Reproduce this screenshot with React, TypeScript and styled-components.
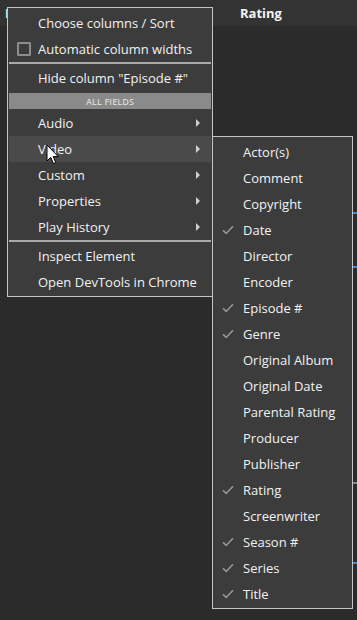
import React from "react";
import styled, { createGlobalStyle } from "styled-components";

const GlobalStyle = createGlobalStyle`
  html, body {
    margin: 0;
    padding: 0;
    background: #2b2b2b;
  }
  body {
    font-family: "Open Sans", "Noto Sans", sans-serif;
    font-size: 13px;
    color: #f2f2f2;
  }
`;

const Page = styled.div`
  position: relative;
  width: 357px;
  height: 620px;
  overflow: hidden;
  background: #2b2b2b;
`;

const HeaderBar = styled.div`
  height: 26px;
  background: #333333;
  display: flex;
  align-items: center;
  padding-left: 5px;
`;

const HeaderCell = styled.div<{ $width: number }>`
  width: ${(p) => p.$width}px;
  font-weight: 700;
  font-size: 13px;
  color: #f4f4f4;
`;

const ScrollMarks = styled.div`
  position: absolute;
  right: 0;
  top: 0;
  width: 5px;
  height: 100%;
`;

const Mark = styled.div<{ $top: number; $color: string }>`
  position: absolute;
  left: 0;
  top: ${(p) => p.$top}px;
  width: 5px;
  height: 2px;
  background: ${(p) => p.$color};
`;

const Menu = styled.div<{ $left: number; $top: number; $width: number }>`
  position: absolute;
  left: ${(p) => p.$left}px;
  top: ${(p) => p.$top}px;
  width: ${(p) => p.$width}px;
  box-sizing: border-box;
  background: #3c3c3c;
  border: 1px solid #c4c4c4;
  padding: 2px 1px 1px;
  display: flex;
  flex-direction: column;
`;

const Item = styled.div<{ $active?: boolean }>`
  height: 26px;
  display: flex;
  align-items: center;
  padding-left: 29px;
  padding-right: 10px;
  background: ${(p) => (p.$active ? "#4a4a4a" : "transparent")};
  white-space: nowrap;
  position: relative;
`;

const Label = styled.span`
  flex: 1;
  color: #f2f2f2;
`;

const Lead = styled.span`
  position: absolute;
  left: 8px;
  top: 0;
  height: 26px;
  display: flex;
  align-items: center;
`;

const CheckBox = styled.span`
  width: 10px;
  height: 10px;
  border: 2px solid #8c8c8c;
  border-radius: 1px;
`;

const Arrow = styled.span`
  width: 0;
  height: 0;
  border-top: 4px solid transparent;
  border-bottom: 4px solid transparent;
  border-left: 4px solid #cfcfcf;
  margin-right: 1px;
`;

const Separator = styled.div`
  height: 2px;
  margin: 0 0 1px;
  background: #a9a9a9;
`;

const SectionHead = styled.div`
  height: 16px;
  margin: 2px 0 1px;
  background: #8a8a8a;
  color: #d8d8d8;
  font-size: 9px;
  font-weight: 600;
  display: flex;
  align-items: center;
  justify-content: center;
  letter-spacing: 0.1px;
`;

const Cursor = styled.svg`
  position: absolute;
  left: 46px;
  top: 144px;
`;

const Check = () => (
  <svg width="12" height="10" viewBox="0 0 12 10">
    <path d="M1 5.2 L4.2 8.4 L11 1.2" fill="none" stroke="#9a9a9a" strokeWidth="1.5" />
  </svg>
);

const fields: [string, boolean][] = [
  ["Actor(s)", false],
  ["Comment", false],
  ["Copyright", false],
  ["Date", true],
  ["Director", false],
  ["Encoder", false],
  ["Episode #", true],
  ["Genre", true],
  ["Original Album", false],
  ["Original Date", false],
  ["Parental Rating", false],
  ["Producer", false],
  ["Publisher", false],
  ["Rating", true],
  ["Screenwriter", false],
  ["Season #", true],
  ["Series", true],
  ["Title", true],
];

const groups = ["Audio", "Video", "Custom", "Properties", "Play History"];

export default function App() {
  return (
    <Page>
      <GlobalStyle />
      <HeaderBar>
        <HeaderCell $width={235}>E</HeaderCell>
        <HeaderCell $width={80}>Rating</HeaderCell>
      </HeaderBar>
      <ScrollMarks>
        <Mark $top={212} $color="#3d8fd6" />
        <Mark $top={266} $color="#3d8fd6" />
        <Mark $top={482} $color="#8a8a8a" />
        <Mark $top={562} $color="#3d8fd6" />
      </ScrollMarks>

      <Menu $left={7} $top={7} $width={206}>
        <Item>
          <Label>Choose columns / Sort</Label>
        </Item>
        <Item>
          <Lead>
            <CheckBox />
          </Lead>
          <Label>Automatic column widths</Label>
        </Item>
        <Separator />
        <Item>
          <Label>Hide column "Episode #"</Label>
        </Item>
        <SectionHead>ALL FIELDS</SectionHead>
        {groups.map((g) => (
          <Item key={g} $active={g === "Video"}>
            <Label>{g}</Label>
            <Arrow />
          </Item>
        ))}
        <Separator />
        <Item>
          <Label>Inspect Element</Label>
        </Item>
        <Item>
          <Label>Open DevTools in Chrome</Label>
        </Item>
      </Menu>

      <Menu $left={212} $top={136} $width={141}>
        {fields.map(([name, on]) => (
          <Item key={name}>
            {on && (
              <Lead>
                <Check />
              </Lead>
            )}
            <Label>{name}</Label>
          </Item>
        ))}
      </Menu>

      <Cursor width="14" height="22" viewBox="0 0 14 22">
        <path
          d="M1 1 L1 17 L4.8 13.4 L7.4 19.6 L9.8 18.6 L7.2 12.6 L12.2 12.6 Z"
          fill="#ffffff"
          stroke="#000000"
          strokeWidth="1"
          strokeLinejoin="miter"
        />
      </Cursor>
    </Page>
  );
}
